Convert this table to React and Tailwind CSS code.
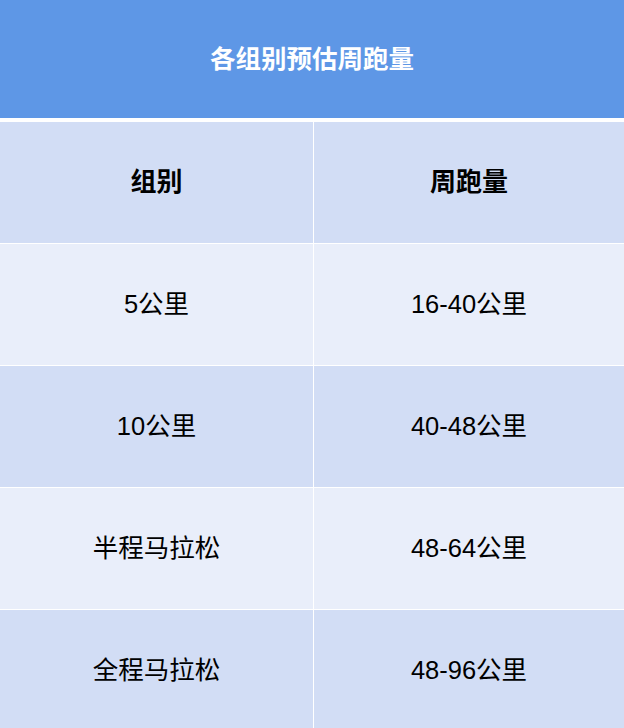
import { Fragment } from "react";

export default function App() {
  const rows = [
    ["5公里", "16-40公里"],
    ["10公里", "40-48公里"],
    ["半程马拉松", "48-64公里"],
    ["全程马拉松", "48-96公里"],
  ];
  const font = { fontFamily: '"Liberation Sans", "Noto Sans CJK SC", sans-serif' };
  return (
    <div className="bg-white w-[624px] h-[728px] overflow-hidden" style={font}>
      <div className="h-[118px] bg-[#5e97e6] flex items-center justify-center text-white font-bold text-[25.5px] mb-[4px]">
        各组别预估周跑量
      </div>
      <div className="grid grid-cols-[313px_1fr] gap-[1px]">
        <div className="h-[121px] bg-[#d2ddf5] flex items-center justify-center font-bold text-[26px] text-black">组别</div>
        <div className="h-[121px] bg-[#d2ddf5] flex items-center justify-center font-bold text-[26px] text-black">周跑量</div>
        {rows.map((r, i) => (
          <Fragment key={i}>
            <div
              className={
                "h-[121px] flex items-center justify-center text-[25.5px] text-black " +
                (i % 2 === 0 ? "bg-[#e9eefa]" : "bg-[#d2ddf5]")
              }
            >
              {r[0]}
            </div>
            <div
              className={
                "h-[121px] flex items-center justify-center text-[25.5px] text-black " +
                (i % 2 === 0 ? "bg-[#e9eefa]" : "bg-[#d2ddf5]")
              }
            >
              {r[1]}
            </div>
          </Fragment>
        ))}
      </div>
    </div>
  );
}
